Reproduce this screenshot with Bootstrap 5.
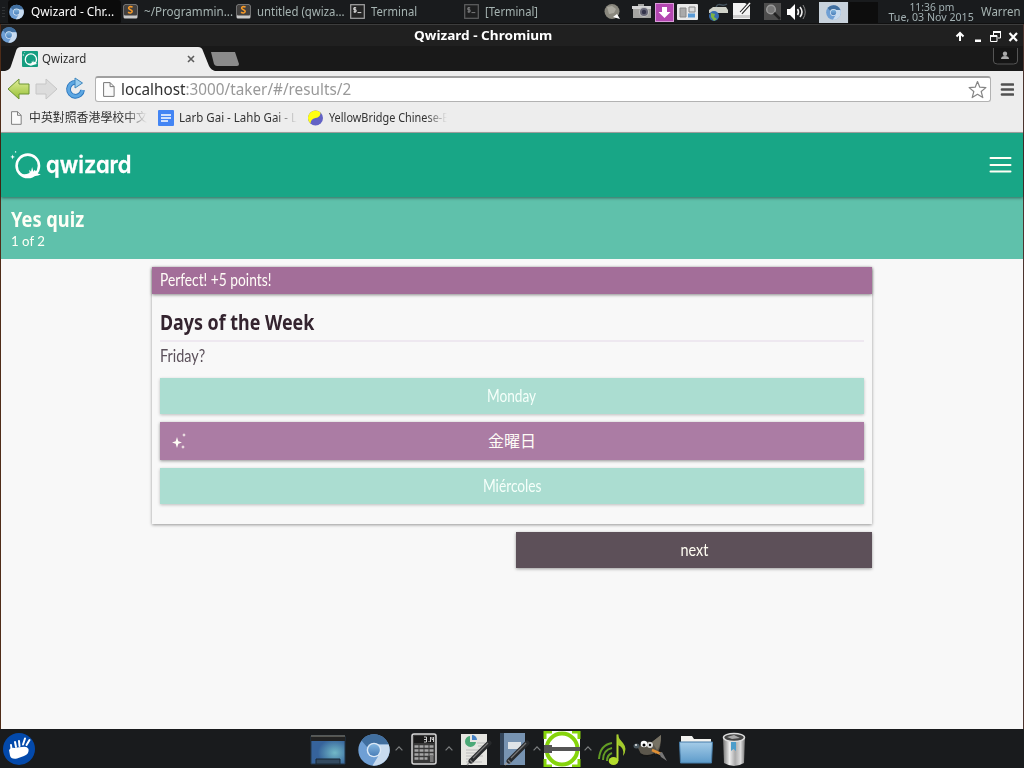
<!DOCTYPE html>
<html lang="en">
<head>
<meta charset="utf-8">
<title>Qwizard</title>
<link href="https://cdn.jsdelivr.net/npm/bootstrap@5.3.0/dist/css/bootstrap.min.css" rel="stylesheet">
<style>
body{width:1024px;height:768px;overflow:hidden;background:#191b1d;font-family:"Noto Sans","Open Sans","Noto Sans CJK TC",sans-serif;font-size:12px;line-height:1}
svg{display:block;flex:none}
.fit{display:inline-block;white-space:pre;transform-origin:0 50%;line-height:1.3}
.fit-c{transform-origin:50% 50%}
.slot{flex:none;white-space:nowrap}
.taskbar{height:24px;background:#191b1d;display:grid;align-items:center;color:#a6b4b2;border-bottom:1px solid #101010;
grid-template-columns:8px 115px 21px 92px 21px 93px 21px 93px 21px 119px 28px 23px 22px 31px 25px 31px 23px 32px 30px 37px 91px 1fr}
.task-active{background:#0b0b0b;height:24px;color:#fff;width:113px;border-radius:3px}
.clock{font-size:10.5px;color:#a3b1b3;height:21px}
.clock .fit{line-height:10px}
.titlebar{height:22px;background:#202020;color:#fff;border-top:1px solid #3d3d3d}
.title-text{margin-left:-52px;font-size:13px}
.tabs{height:25px;background:#191919}
.window{border-left:1px solid #4f2c18;border-right:1px solid #4c342e;height:705px;background:#f8f8f8}
.tools{height:36px;background:#ededed;padding:0 8px 0 5px}
.urlbox{width:896px;height:26px;border:1px solid #b2b2b2;border-top:2px solid #a0a0a0;border-radius:3px;background:#fff;font-size:16px;color:#999;padding:0 3px 0 7px}
.urlbox b{font-weight:400;color:#303030}
.marks{height:26px;background:#ededed;border-bottom:1px solid #a8aaa9;color:#333;display:grid;align-items:center;padding:0 0 3px 10px;grid-template-columns:18px 129px 21px 129px 21px 1fr}
.fade-end{-webkit-mask-image:linear-gradient(90deg,#000 82%,transparent);mask-image:linear-gradient(90deg,#000 82%,transparent);overflow:hidden;width:118px}
.app-head{height:64px;background:#18a686;box-shadow:0 1px 3px rgba(0,0,0,.45);z-index:1;padding:0 11px 0 9px}
.wordmark{font:600 24px/1.2 Inter,sans-serif;font-feature-settings:"cv11","ss03";color:#fff;-webkit-text-stroke:.3px #fff}
.quiz-head{height:62px;background:#5fc1ab;color:#fffff6;padding:10px 10px 0}
.quiz-head .name{font-size:21px;font-weight:700;line-height:22px;height:24px}
.quiz-head .name .fit{line-height:24px}
.quiz-head .count{font-family:Lato,sans-serif;font-size:14px;line-height:20px;height:20px}
.quiz{width:720px;margin-top:8px;font-family:Lato,"Noto Sans CJK JP",sans-serif;font-size:17px}
.sheet{height:257px;box-shadow:0 1px 3px rgba(0,0,0,.4)}
.result{height:27px;background:#a36e99;color:#fffdf7;padding:0 8px;box-shadow:0 1px 3px rgba(0,0,0,.45)}
.question{height:48px;color:#34242f;font:700 21px "Noto Sans",sans-serif;border-bottom:2px solid #eee8f0;padding-top:11px}
.prompt{height:36px;color:#5b505a;padding-bottom:7px}
.answer{height:36px;background:#abddd1;color:#f5fffa;box-shadow:0 1px 3px rgba(0,0,0,.24);margin-bottom:8px}
.right-one{height:38px;background:#ab7ca4;color:#fffdf7;box-shadow:0 1px 3px rgba(0,0,0,.42);font-size:16px}
.spark{position:absolute;left:10px;top:9px}
.next{width:356px;height:36px;background:#5d5059;color:#fffdf2;box-shadow:0 1px 3px rgba(0,0,0,.38);margin-top:8px}
.dock{height:39px;display:grid;align-items:center;background:#191b1d;grid-template-columns:3px 307px 48px 37px 16px 34px 16px 38px 34px 10px 41px 14px 35px 46px 43px 1fr}
</style>
</head>
<body>
<svg width="0" height="0" class="position-absolute"><defs>
<linearGradient id="blue" x2="0" y2="1"><stop stop-color="#82b5df"/><stop offset="1" stop-color="#4b7fb9"/></linearGradient>
<linearGradient id="fold" x2="0" y2="1"><stop stop-color="#a5cce8"/><stop offset="1" stop-color="#5d9bca"/></linearGradient>
<linearGradient id="lime" x2="0" y2="1"><stop stop-color="#e2ee9a"/><stop offset="1" stop-color="#95bf35"/></linearGradient>
<linearGradient id="steel"><stop stop-color="#777"/><stop offset=".3" stop-color="#eee"/><stop offset=".55" stop-color="#aaa"/><stop offset=".8" stop-color="#ddd"/><stop offset="1" stop-color="#777"/></linearGradient>
<radialGradient id="desk" cx=".7" cy=".6"><stop stop-color="#72b9c7"/><stop offset="1" stop-color="#36639b"/></radialGradient>
<symbol id="chromium" viewBox="0 0 32 32"><circle cx="16" cy="16" r="15.7" fill="#6f9fd4"/><path d="M16 .3A15.7 15.7 0 0 1 30.7 10.500H16L9 13 3.500 6.500A15.700 15.700 0 0 1 16 .3z" fill="#416f9f"/><path d="M30.700 10.500A15.700 15.700 0 0 1 14.500 31.600L21.500 20l1-5-3-4.500z" fill="#c8dbef"/><circle cx="16" cy="16" r="7.300" fill="#dce9f6"/><circle cx="16" cy="16" r="5.900" fill="url(#blue)"/></symbol>
<symbol id="sublime" viewBox="0 0 15 15"><rect x=".5" y=".5" width="14" height="14" rx="1.500" fill="#c9c9c9"/><rect x="1" y="1" width="13" height="10.500" rx="1" fill="#42403f"/><path d="M9.600 3C7 2.200 5.400 2.800 5.700 4.300S9.500 5.600 9.200 7.500 6.500 9.200 5 8.300" stroke="#f79a28" stroke-width="1.600" fill="none"/></symbol>
<symbol id="term" viewBox="0 0 15 15"><rect x=".7" y=".7" width="13.600" height="13.600" fill="#242424" stroke="#a5a5a5" stroke-width="1.200"/><path d="M6.200 3.800H3.800v2h2.300v2H3.500M4.900 3v6M7.500 8.600h3.800" stroke="#eee" stroke-width=".9" fill="none"/></symbol>
<symbol id="page" viewBox="0 0 12 15"><path d="M.6.600h6.500l4 4v9.800H.6z" fill="#fafafa" stroke="#777"/><path d="M7.100.6v4h4" fill="none" stroke="#777"/></symbol>
<symbol id="qmark" viewBox="0 0 32 28"><circle cx="17.800" cy="14.800" r="11.200" fill="none" stroke="#fff" stroke-width="2.600"/><path d="M9 22q6 5.500 13.500 2.500 4 1.500 8.500-1.300-2.600.2-4-1.400l-2.300-3-1.300 2-1.300-4.800-1.100 4.700-1.600-2 .1 3.200Q14 24.500 9 22z" fill="#fff"/><path fill="#fff" d="M2.600 3.500l.6 1.800 1.800.6-1.800.6-.6 1.900-.6-1.900L.2 5.900 2 5.300zM5.600 0l.9.900-.9.900-.9-.9z"/></symbol>
<symbol id="up" viewBox="0 0 8 5"><path d="M.6 4.300L4 .9l3.400 3.400" fill="none" stroke="#7e8182" stroke-width="1.200"/></symbol>
<symbol id="pen" viewBox="0 0 26 26"><path d="M1 25l5-5" stroke="#999" stroke-width="1.500"/><path d="M5 21L23 3" stroke="#282a2c" stroke-width="5" stroke-linecap="round"/><path d="M7 18L22 3M4 20l3 3" stroke="#777" stroke-width="1.300"/></symbol>
</defs></svg>

<header class="taskbar">
<svg width="8" height="24"><path d="M3.500 7v10" stroke="#303335" stroke-dasharray="1 2" stroke-width="3"/></svg>
<div class="task-active d-flex align-items-center"><svg width="23" height="16"><use href="#chromium" x="1" width="15" height="16"/></svg><span class="fit" data-w="83">Qwizard - Chr...</span></div>
<svg width="15" height="17"><use href="#sublime" width="15" height="15"/></svg><span class="slot"><span class="fit" data-w="89">~/Programmin...</span></span>
<svg width="15" height="17"><use href="#sublime" width="15" height="15"/></svg><span class="slot"><span class="fit" data-w="88">untitled (qwiza...</span></span>
<svg width="15" height="17"><use href="#term" width="15" height="15"/></svg><span class="slot"><span class="fit" data-w="46">Terminal</span></span>
<svg width="15" height="17" opacity=".5"><use href="#term" width="15" height="15"/></svg><span class="slot"><span class="fit" data-w="53">[Terminal]</span></span>
<svg width="17" height="17"><circle cx="8" cy="7.500" r="7.500" fill="#89877d"/><path d="M3 3l5-1 4 3-2 4-5 1zM10 10l3 1" fill="#aaa89e"/><path d="M9 13l4-3 3 5z" fill="#fff"/></svg>
<svg width="20" height="18"><path d="M1 3h5V1h6v2h7v12H1z" fill="#a5a5a2"/><path d="M0 3h19v3H0z" fill="#d5d5d5"/><circle cx="12" cy="9" r="5" fill="#c0c0c0"/><circle cx="12" cy="9" r="4" fill="#686878"/><circle cx="12" cy="9" r="2.200" fill="#34344b"/></svg>
<svg width="19" height="19"><rect x=".5" y=".5" width="18" height="18" fill="#b447b1" stroke="#d99cd8"/><path d="M7 4h5v5h3.500l-6 6-6-6H7z" fill="#fff"/></svg>
<svg width="22" height="17"><rect width="21" height="16" rx="1" fill="#e9e9e9"/><path d="M3 4h6v9H3z" fill="#aaa" stroke="#888"/><path d="M12 3h6v5h-6z" fill="#ddd" stroke="#888"/><path d="M11 9.500h7v4h-7z" fill="#5b9bd5"/></svg>
<svg width="20" height="20"><path d="M8 5c3-6 5 1 11-3" stroke="#44525d" fill="none" stroke-width="1.500"/><path d="M1 8l4-3h13l2 3v3H1z" fill="#cfd1c8"/><circle cx="6" cy="14" r="5" fill="#376caf"/><path d="M3 11l4 1-1 3 3 2-3 2-3-4z" fill="#7eb443"/></svg>
<svg width="19" height="20"><path d="M0 1h12l5 3v13H0z" fill="#f2f2f2"/><path d="M0 13h17v3H0z" fill="#ccc"/><path d="M8 11l9-10" stroke="#222" stroke-width="3.500"/><path d="M7 12l10-11" stroke="#fff" stroke-width="1.500"/></svg>
<svg width="18" height="18"><rect width="17" height="17" fill="#4d4d4d"/><circle cx="7" cy="6.500" r="4.300" fill="#777" stroke="#999" stroke-width="1.500"/><path d="M10 10l6 6" stroke="#222" stroke-width="2.500"/></svg>
<svg width="20" height="16"><path d="M0 5h3l5-5v16l-5-5H0z" fill="#fff"/><path d="M10.500 5q2 3 0 6M13 3q4 5 0 10" fill="none" stroke="#eee" stroke-width="1.600"/><path d="M16 1q4.500 7 0 14" fill="none" stroke="#888"/></svg>
<svg width="29" height="21"><path fill="#c8d2dc" d="M0 0h29v21H0z"/><use href="#chromium" x="7" y="3" width="15" height="15"/></svg>
<svg width="29" height="21"><path fill="#0d0d0d" d="M0 0h29v21H0z"/></svg>
<div class="clock d-flex flex-column align-items-center"><span class="fit fit-c" data-w="45">11:36 pm</span><span class="fit fit-c" data-w="85">Tue, 03 Nov 2015</span></div>
<span class="slot ps-1"><span class="fit" data-w="40">Warren</span></span>
</header>

<main class="window d-flex flex-column">
<div class="titlebar d-flex align-items-center justify-content-between flex-shrink-0">
<svg width="65" height="19"><use href="#chromium" x="0" y="1" width="16" height="16"/></svg>
<span class="fit fit-c fw-bold title-text" data-w="138">Qwizard - Chromium</span>
<svg width="70" height="16"><path d="M7 13V6" stroke="#fff" stroke-width="2"/><path d="M3.500 8.500L7 5l3.500 3.500" stroke="#fff" stroke-width="2" fill="none"/><path d="M22 11.500h6V14h-6z" fill="#fff"/><path d="M40.500 8V4h7v6H45M37.500 7.500H44v6h-6.500z" fill="none" stroke="#fff"/><path d="M37 8h7M40 4h8" stroke="#fff" stroke-width="2"/><path d="M56.500 5l7.500 8M64 5l-7.500 8" stroke="#fff" stroke-width="2.200"/></svg>
</div>
<div class="tabs d-flex justify-content-between flex-shrink-0">
<div class="position-relative"><svg width="245" height="25"><path d="M4 25q5-1 6-5l5-15q1-4 5-4h177q4 0 5 4l6 15q2 4 6 5z" fill="#ededed"/><path d="M210 6h24l4 12q0 2-2 2h-20q-2 0-3-2z" fill="#8b8b8b"/><rect x="21" y="5" width="16" height="16" rx="1" fill="#159d80"/><use href="#qmark" x="21" y="6" width="16" height="14"/><path d="M187 10l6 6M193 10l-6 6" stroke="#5d5d5d" stroke-width="1.600"/></svg>
<span class="fit position-absolute" style="left:41px;top:5px;color:#303030" data-w="44">Qwizard</span></div>
<svg width="30" height="20"><path d="M.5 2v13q0 3 4 3h16q4 0 4-3V2" fill="#151515" stroke="#555"/><circle cx="12" cy="7.800" r="2.200" fill="#aaa"/><path d="M8 13q0-3 4-3t4 3z" fill="#aaa"/></svg>
</div>
<div class="tools d-flex align-items-center flex-shrink-0">
<svg width="89" height="26"><path d="M2 13L13 3v5h10v10H13v5z" fill="url(#lime)" stroke="#6d9434" stroke-linejoin="round"/><path d="M51 13L40 3v5H30v10h10v5z" fill="#dcdcdc" stroke="#c6c6c6" stroke-linejoin="round"/><path d="M70 6.300A7 7 0 1 0 76.500 14" fill="none" stroke="#2c76bd" stroke-width="4.800"/><path d="M70 6.300A7 7 0 1 0 76.500 14" fill="none" stroke="#5da7e2" stroke-width="3"/><path d="M69 2l7.500 5-7.500 5z" fill="#9acdef" stroke="#3e86bd"/></svg>
<div class="urlbox d-flex align-items-center"><svg width="18" height="16"><use href="#page" x="0" width="12" height="15"/></svg><span class="fit" data-w="230"><b>localhost</b>:3000/taker/#/results/2</span>
<svg width="20" height="20" class="ms-auto"><path d="M10.500 1.500l2.300 5.700 6.100.4-4.700 3.900 1.600 6.100-5.300-3.300-5.300 3.300 1.600-6.100-4.700-3.900 6.100-.4z" fill="#fff" stroke="#858585" stroke-linejoin="round" stroke-width="1.200"/></svg></div>
<svg width="23" height="18"><path d="M11 4.500h11M11 9.500h11M11 14.500h11" stroke="#505050" stroke-width="2.700" stroke-linecap="round"/></svg>
</div>
<div class="marks flex-shrink-0">
<svg width="12" height="15"><use href="#page" width="11" height="14"/></svg><span class="slot fade-end"><span class="fit" data-w="119">中英對照香港學校中文</span></span>
<svg width="16" height="16"><rect width="16" height="16" rx="1" fill="#4385f4"/><path d="M3 5h10M3 8h10M3 11h7" stroke="#fff" stroke-width="1.300"/></svg><span class="slot fade-end"><span class="fit" data-w="118">Larb Gai - Lahb Gai - L</span></span>
<svg width="16" height="16"><circle cx="7.500" cy="8" r="7.500" fill="#6262c5"/><path d="M12.500 2.400A7.500 7.500 0 0 0 2.500 13.600Q2.500 9 7.500 8t5-5.600z" fill="#ff1"/></svg><span class="slot fade-end"><span class="fit" data-w="119">YellowBridge Chinese-E</span></span>
</div>
<nav class="app-head d-flex align-items-center justify-content-between position-relative flex-shrink-0">
<div class="d-flex align-items-center"><svg width="36" height="29"><use href="#qmark" x="0" width="32" height="28"/></svg><span class="fit wordmark" data-w="86">qwizard</span></div>
<svg width="23" height="18"><path d="M1.500 2h20M1.500 9h20M1.500 15.500h20" stroke="#fffff5" stroke-width="2" stroke-linecap="round"/></svg>
</nav>
<section class="quiz-head flex-shrink-0">
<div class="name"><span class="fit" data-w="73">Yes quiz</span></div>
<div class="count"><span class="fit" data-w="34">1 of 2</span></div>
</section>
<section class="quiz mx-auto">
<div class="sheet">
<div class="result d-flex align-items-center"><span class="fit" data-w="111">Perfect! +5 points!</span></div>
<div class="px-2">
<div class="question d-flex align-items-center"><span class="fit" data-w="154">Days of the Week</span></div>
<div class="prompt d-flex align-items-center"><span class="fit" data-w="45">Friday?</span></div>
<div class="answer d-flex align-items-center justify-content-center"><span class="fit fit-c" data-w="49">Monday</span></div>
<div class="answer right-one position-relative d-flex align-items-center justify-content-center"><svg class="spark" width="18" height="20"><path d="M7 6l1.300 4.200L12 11.500l-3.700 1.300L7 17l-1.300-4.200L2 11.500l3.700-1.300zM14 2l.6 1.400 1.400.6-1.400.6-.6 1.400-.6-1.400-1.400-.6 1.400-.6zM13 14l.6 1.400 1.400.6-1.400.6-.6 1.400-.6-1.400-1.400-.6 1.400-.6z" fill="#fffdf5"/></svg><span class="fit fit-c" data-w="48">金曜日</span></div>
<div class="answer d-flex align-items-center justify-content-center"><span class="fit fit-c" data-w="59">Miércoles</span></div>
</div>
</div>
<div class="next ms-auto d-flex align-items-center justify-content-center"><span class="fit fit-c" data-w="28">next</span></div>
</section>
</main>

<footer class="dock">
<span></span>
<svg width="32" height="34"><circle cx="16" cy="17" r="16" fill="#0349ab"/><path d="M6 18q2-3 6-2 4-1 7-1 5-1 6.500 2 1 5-4.500 7l-7 2.500q-6 1-7-3z" fill="#fff"/><path d="M8.500 17L8 13M13 15l-1-5M16.500 14l-.5-5M20 12.500l2-6M23.500 13l3-5" stroke="#fff" stroke-width="2" stroke-linecap="round"/></svg>
<svg width="36" height="36"><path d="M1 5h34v28H1z" fill="url(#desk)" stroke="#24384b"/><path d="M1 5h34v5H1z" fill="#222"/><path d="M1 5h34" stroke="#8a8980"/><path d="M6 28h24v5H6z" fill="#334a60" stroke="#182733"/></svg>
<svg width="32" height="36"><use href="#chromium" y="3" width="32" height="32"/></svg>
<svg width="8" height="5"><use href="#up"/></svg>
<svg width="28" height="34"><rect x="1" y="2" width="24" height="30" rx="2" fill="#383838" stroke="#d7d7d7" stroke-width="1.500"/><path d="M3 4h20v7H3z" fill="#191919"/><path d="M13 5h2.500v5H13M15.500 7.500H13M17.500 9.500h1M19.500 5v5M21 5v2.500h1.500M22.500 5v5" stroke="#ddd" stroke-width=".9" fill="none"/><path d="M3.500 14.500h19M3.500 18.500h19M3.500 22.500h19M3.500 26.500h13" stroke="#a5a5a5" stroke-width="2.600" stroke-dasharray="4 1"/><path d="M19 23h3.500v7H19z" fill="#777"/></svg>
<svg width="8" height="5"><use href="#up"/></svg>
<svg width="34" height="36"><path d="M0 3h26v31H0z" fill="#e6e6e1"/><path d="M16 12h8M17 15h6M5 19h17M5 22h12M5 25h17M5 28h10M5 31h16" stroke="#bbb"/><path d="M9 5a5.500 5.500 0 1 0 6 6H9z" fill="#4ba977"/><path d="M11 4a5 5 0 0 1 5 5h-5z" fill="#4682c5"/><use href="#pen" x="5" y="9" width="26" height="26"/></svg>
<svg width="33" height="36"><path d="M1 2h25v32H1z" fill="#7793b1"/><path d="M1 2h4v32H1z" fill="#34465b"/><path d="M9 11h13v7H9z" fill="#dfe4e8"/><use href="#pen" x="5" y="9" width="26" height="26"/></svg>
<svg width="8" height="5"><use href="#up"/></svg>
<svg width="38" height="36"><path fill="#fff" d="M1 0h36v36H1z"/><path d="M2 8V1h7M29 1h7v7M36 28v7h-7M9 35H2v-7" fill="none" stroke="#85d40b" stroke-width="3"/><circle cx="19" cy="18" r="15.500" fill="none" stroke="#85d40b" stroke-width="4"/><path d="M1 14h8v2h28v4H9v2H1z" fill="#555"/></svg>
<svg width="8" height="5"><use href="#up"/></svg>
<svg width="31" height="36"><path d="M19.500 30V3.500" stroke="#b7db35" stroke-width="2"/><path d="M19 3q2 5 6 9 5 6 0 13 2-8-5-11z" fill="#a3ca2c"/><ellipse cx="15.500" cy="30" rx="4.800" ry="4" fill="#b3dc2c"/><path d="M1 28Q2 14 14 12M5 29q0-10 9-12M9 30q0-6 5-8" fill="none" stroke="#639d24" stroke-width="2"/></svg>
<svg width="36" height="36"><path d="M5 17q6-8 14-6l9-7q0 13-3 17-8 8-17 2z" fill="#5c574c"/><path d="M19 11l9-7q0 11-4 15z" fill="#777264"/><circle cx="11" cy="13" r="3.300" fill="#fff"/><circle cx="17" cy="14" r="3" fill="#ddd"/><circle cx="11" cy="14" r="1.500"/><circle cx="17" cy="14" r="1.200"/><ellipse cx="3.500" cy="15" rx="3" ry="2.500" fill="#4c5960"/><circle cx="3" cy="14" r="1" fill="#eee"/><path d="M7 23q7 4 15 0" stroke="#171717" stroke-width="2" fill="none"/><path d="M19 19l9 4" stroke="#e29034" stroke-width="2.500"/><path d="M26 22l3-1 5 9-6-4z" fill="#777"/></svg>
<svg width="35" height="36"><path d="M2 5h11l2 3h17v8H2z" fill="#f2f2ef"/><path d="M.5 11h33l-1 21h-31z" fill="url(#fold)" stroke="#477da9"/></svg>
<svg width="25" height="36"><path d="M1 6q11-7 22 0l-1 26q-10 6-20 0z" fill="url(#steel)"/><ellipse cx="12" cy="6.500" rx="10.500" ry="4" fill="#444" stroke="#ddd" stroke-width="1.500"/><path d="M5 6l7-2 6 3-8 1z" fill="#aaa"/><path d="M9 11h5v9l-2.500-2L9 20z" fill="#4d9dca"/></svg>
</footer>
<script src="https://cdn.jsdelivr.net/npm/bootstrap@5.3.0/dist/js/bootstrap.bundle.min.js"></script>
<script>
// Condense each label to its intended width
document.querySelectorAll('[data-w]').forEach(function (el) {
  el.style.transform = 'scaleX(' + el.dataset.w / el.offsetWidth + ')';
});
</script>
</body>
</html>
